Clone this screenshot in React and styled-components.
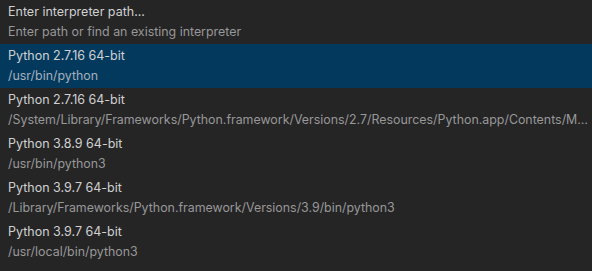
import React from "react";
import styled, { createGlobalStyle } from "styled-components";

const Global = createGlobalStyle`
  html, body { margin: 0; padding: 0; background: #252526; }
  body { width: 592px; height: 271px; overflow: hidden; }
`;

const List = styled.div`
  width: 592px;
  height: 271px;
  background: #252526;
  font-family: Inter, "Open Sans", sans-serif;
  font-size: 12.5px;
  display: flex;
  flex-direction: column;
  overflow: hidden;
`;

const Row = styled.div`
  height: 44px;
  flex: none;
  padding: 0 0 0 8px;
  display: flex;
  flex-direction: column;
  justify-content: center;
  background: ${(p) => (p.$active ? "#04395e" : "transparent")};
  box-sizing: border-box;
`;

const Label = styled.div`
  color: #d0d0d0;
  line-height: 20px;
  white-space: nowrap;
`;

const Detail = styled.div`
  color: ${(p) => (p.$active ? "#a3b0bb" : "#989898")};
  font-size: 12.4px;
  line-height: 20px;
  white-space: nowrap;
  overflow: hidden;
  text-overflow: ellipsis;
`;

const items = [
  { label: "Enter interpreter path...", detail: "Enter path or find an existing interpreter" },
  { label: "Python 2.7.16 64-bit", detail: "/usr/bin/python", active: true },
  {
    label: "Python 2.7.16 64-bit",
    detail:
      "/System/Library/Frameworks/Python.framework/Versions/2.7/Resources/Python.app/Contents/MacOS/Python",
  },
  { label: "Python 3.8.9 64-bit", detail: "/usr/bin/python3" },
  { label: "Python 3.9.7 64-bit", detail: "/Library/Frameworks/Python.framework/Versions/3.9/bin/python3" },
  { label: "Python 3.9.7 64-bit", detail: "/usr/local/bin/python3" },
];

export default function App() {
  return (
    <>
      <Global />
      <List>
        {items.map((it, i) => (
          <Row key={i} $active={it.active}>
            <Label>{it.label}</Label>
            <Detail $active={it.active}>{it.detail}</Detail>
          </Row>
        ))}
      </List>
    </>
  );
}
